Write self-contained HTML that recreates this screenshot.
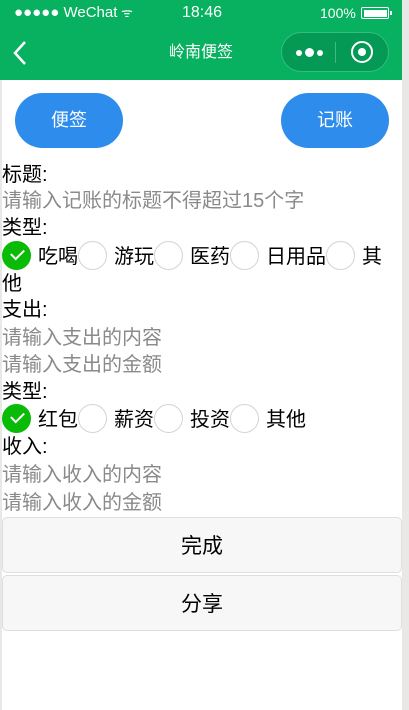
<!DOCTYPE html>
<html><head><meta charset="utf-8"><style>
*{margin:0;padding:0;box-sizing:border-box}
body{width:409px;height:710px;background:#e9e8e6;font-family:"Liberation Sans","Noto Sans CJK SC",sans-serif;position:relative;overflow:hidden}
.page{position:absolute;left:2px;top:0;width:400px;height:710px;background:#fff}
.hdr{position:absolute;left:0;top:0;width:402px;height:80px;background:#07b15f;color:#fff}
.t{position:absolute;font-size:20px;line-height:26px;color:#000;left:2px;white-space:nowrap}
.ph{color:#8a8a8a}
.r{display:inline-block;width:29px;height:29px;border:1px solid #d4d4d4;border-radius:50%;vertical-align:middle;margin-right:7px;position:relative;top:-2px;background:#fff}
.r.on{background:#09bb07;border-color:#09bb07}
.r.on::after{content:"";position:absolute;left:8px;top:7px;width:11px;height:6px;border-left:2.5px solid #fff;border-bottom:2.5px solid #fff;transform:rotate(-45deg)}
.pill{position:absolute;top:93px;width:108px;height:55px;border-radius:28px;background:#2d8cec;color:#fff;font-size:18px;text-align:center;line-height:55px}
.btn{position:absolute;left:2px;width:400px;height:56px;background:#f7f7f7;border:1px solid #dedede;border-radius:5px;text-align:center;line-height:58px;font-size:21px;color:#000}
</style></head><body>
<div class="page"></div>
<div class="hdr">
 <div style="position:absolute;left:14px;top:3px;font-size:15px;line-height:20px">●●●●● WeChat<span style="font-size:13px"> ᯤ</span></div>
 <div style="position:absolute;left:182px;top:2px;font-size:16px;line-height:22px">18:46</div>
 <div style="position:absolute;left:320px;top:3px;font-size:14px;line-height:20px">100%</div>
 <div style="position:absolute;left:361px;top:7px;width:28px;height:12px;border:1.5px solid #fff;border-radius:2px;padding:1.5px"><div style="width:100%;height:100%;background:#fff"></div></div>
 <div style="position:absolute;left:390px;top:11px;width:2px;height:4px;background:#fff"></div>
 <svg style="position:absolute;left:12px;top:40px" width="16" height="26"><path d="M13 2 L3 13 L13 24" stroke="#fff" stroke-width="2.5" fill="none"/></svg>
 <div style="position:absolute;left:0;width:402px;top:42px;text-align:center;font-size:16px;line-height:22px">岭南便签</div>
 <div style="position:absolute;left:281px;top:32px;width:108px;height:40px;border-radius:20px;background:#049a56;border:1px solid #2fc07c">
  <div style="position:absolute;left:14px;top:17px;width:6px;height:6px;border-radius:50%;background:#fff"></div>
  <div style="position:absolute;left:23px;top:15px;width:9px;height:9px;border-radius:50%;background:#fff"></div>
  <div style="position:absolute;left:35px;top:17px;width:6px;height:6px;border-radius:50%;background:#fff"></div>
  <div style="position:absolute;left:53px;top:9px;width:1px;height:21px;background:#3dbb80"></div>
  <div style="position:absolute;left:69px;top:8px;width:22px;height:22px;border-radius:50%;border:2.5px solid #fff"></div>
  <div style="position:absolute;left:76px;top:15px;width:8px;height:8px;border-radius:50%;background:#fff"></div>
 </div>
</div>
<div class="pill" style="left:15px">便签</div>
<div class="pill" style="left:281px">记账</div>
<div class="t" style="top:162px">标题:</div>
<div class="t ph" style="top:188px">请输入记账的标题不得超过15个字</div>
<div class="t" style="top:215px">类型:</div>
<div class="t" style="top:243px"><span class="r on"></span>吃喝<span class="r"></span>游玩<span class="r"></span>医药<span class="r"></span>日用品<span class="r"></span>其</div>
<div class="t" style="top:271px">他</div>
<div class="t" style="top:297px">支出:</div>
<div class="t ph" style="top:325px">请输入支出的内容</div>
<div class="t ph" style="top:352px">请输入支出的金额</div>
<div class="t" style="top:379px">类型:</div>
<div class="t" style="top:406px"><span class="r on"></span>红包<span class="r"></span>薪资<span class="r"></span>投资<span class="r"></span>其他</div>
<div class="t" style="top:434px">收入:</div>
<div class="t ph" style="top:462px">请输入收入的内容</div>
<div class="t ph" style="top:490px">请输入收入的金额</div>
<div class="btn" style="top:517px">完成</div>
<div class="btn" style="top:575px">分享</div>
</body></html>
